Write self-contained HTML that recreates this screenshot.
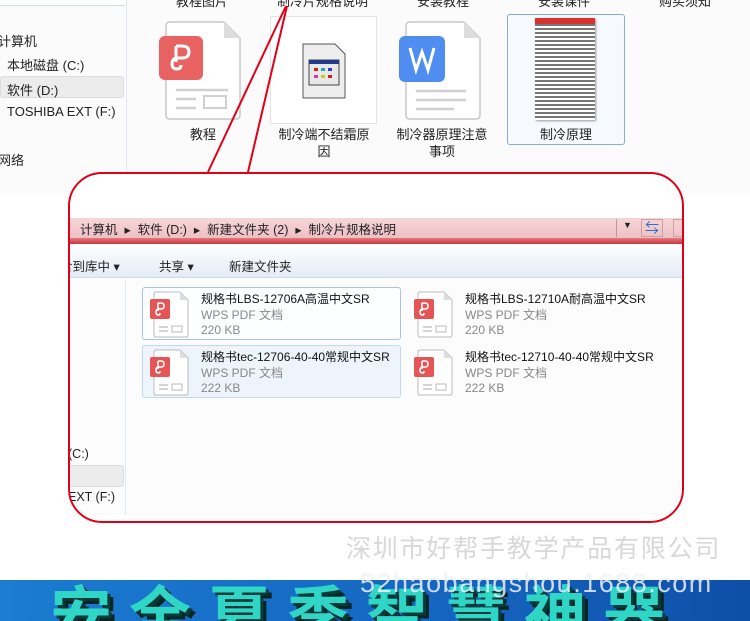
<!DOCTYPE html>
<html><head><meta charset="utf-8">
<style>
*{margin:0;padding:0;box-sizing:border-box}
body{width:750px;height:621px;overflow:hidden;background:#fff;font-family:"Liberation Sans","Noto Sans CJK SC",sans-serif;position:relative;color:#222}
.a{position:absolute}
.t{font-size:13px;white-space:nowrap}
.lbl{font-size:13px;text-align:center;line-height:17px;color:#222}
.tile{position:absolute;width:259px;height:53px;border:1px solid #a9c4e6;border-radius:3px;background:#fdfeff}
.tile.sel{background:#eef4fc;border-color:#c4d8f0}
.name{position:absolute;left:58px;top:2px;font-size:12px;color:#111;white-space:nowrap}
.sub{position:absolute;left:58px;font-size:12px;color:#888;white-space:nowrap}
</style></head><body>
<div class="a" style="left:0;top:0;width:750px;height:195px;background:#fbfbfb"></div>
<div class="a" style="left:0;top:0;width:125px;height:6px;border-bottom:1px solid #cfdcec;background:#fff"></div>
<div class="a" style="left:126px;top:0;width:1px;height:195px;background:#dfe7f1"></div>
<div class="a t" style="left:-2px;top:31px">计算机</div>
<div class="a t" style="left:7px;top:55px">本地磁盘 (C:)</div>
<div class="a" style="left:0;top:76px;width:124px;height:22px;background:#ececec;border:1px solid #dcdcdc;border-radius:3px"></div>
<div class="a t" style="left:7px;top:80px">软件 (D:)</div>
<div class="a t" style="left:7px;top:104px">TOSHIBA EXT (F:)</div>
<div class="a t" style="left:-2px;top:150px">网络</div>
<div class="a t" style="left:176px;top:-9px">教程图片</div>
<div class="a t" style="left:277px;top:-9px">制冷片规格说明</div>
<div class="a t" style="left:417px;top:-9px">安装教程</div>
<div class="a t" style="left:538px;top:-9px">安装课件</div>
<div class="a t" style="left:659px;top:-9px">购买须知</div>

<svg class="a" style="left:158px;top:20px" width="86" height="102" viewBox="0 0 86 102">
<path d="M12,2 H66 L82,18 V95 Q82,99 78,99 H12 Q8,99 8,95 V6 Q8,2 12,2Z" fill="#fff" stroke="#c8c8c8" stroke-width="1.5"/>
<path d="M66,2 V18 H82Z" fill="#ddd"/>
<rect x="1" y="16" width="44" height="44" rx="6" fill="#e86262"/>
<path d="M18,26 V42 M18,26 H24 Q31,26 31,32 Q31,38 24,38 H20 Q14,38 14,44 Q14,49 19,49 Q23,49 23,45" fill="none" stroke="#fff" stroke-width="3"/>
<path d="M18,70 H70 M18,79 H38 M18,88 H38" stroke="#d0d0d0" stroke-width="2.5"/>
<rect x="46" y="76" width="22" height="12" fill="none" stroke="#d0d0d0" stroke-width="2"/>
</svg>
<div class="a lbl" style="left:163px;top:126px;width:80px">教程</div>

<div class="a" style="left:270px;top:16px;width:107px;height:108px;border:1px solid #e3e3e3;background:#fff"></div>
<svg class="a" style="left:301px;top:43px" width="46" height="56" viewBox="0 0 46 56">
<path d="M2,1 H34 L44,11 V55 H2Z" fill="#eee" stroke="#555"/>
<rect x="8" y="17" width="30" height="25" fill="#e8e8e8" stroke="#444"/>
<rect x="8" y="17" width="30" height="4" fill="#223a8a"/>
<g fill="#c22"><rect x="13" y="25" width="4" height="3"/></g><g fill="#2aa"><rect x="20" y="25" width="4" height="3"/></g><g fill="#24c"><rect x="27" y="25" width="4" height="3"/></g>
<g fill="#c3c"><rect x="13" y="32" width="4" height="3"/></g><g fill="#cc2"><rect x="20" y="32" width="4" height="3"/></g><g fill="#c22"><rect x="27" y="32" width="4" height="3"/></g>
</svg>
<div class="a lbl" style="left:270px;top:126px;width:108px">制冷端不结霜原<br>因</div>

<svg class="a" style="left:398px;top:20px" width="86" height="102" viewBox="0 0 86 102">
<path d="M12,2 H66 L82,18 V95 Q82,99 78,99 H12 Q8,99 8,95 V6 Q8,2 12,2Z" fill="#fff" stroke="#c8c8c8" stroke-width="1.5"/>
<path d="M66,2 V18 H82Z" fill="#ddd"/>
<rect x="1" y="16" width="46" height="46" rx="6" fill="#4f8ef0"/>
<path d="M12,28 L18,50 L24,32 L30,50 L36,28" fill="none" stroke="#fff" stroke-width="3"/>
<path d="M18,71 H68 M18,80 H68 M18,89 H56" stroke="#d0d0d0" stroke-width="2.5"/>
</svg>
<div class="a lbl" style="left:392px;top:126px;width:100px">制冷器原理注意<br>事项</div>

<div class="a" style="left:507px;top:14px;width:118px;height:131px;border:1px solid #84acdd;border-radius:3px;background:#f6f9fd"></div>
<div class="a" style="left:535px;top:18px;width:60px;height:102px;background:repeating-linear-gradient(#fff 0 2px,#777 2px 4px);box-shadow:1px 1px 2px #999"></div>
<div class="a" style="left:535px;top:18px;width:60px;height:6px;background:#d93030"></div>
<div class="a lbl" style="left:507px;top:126px;width:118px">制冷原理</div>

<svg class="a" style="left:0;top:0" width="750" height="621">
<path d="M208,172 L286,6 M248,172 L287,6" stroke="#e0001b" stroke-width="2" fill="none"/>
</svg>

<div class="a" style="left:68px;top:172px;width:616px;height:351px;border-radius:34px;overflow:hidden;background:#fff">
 <div class="a" style="left:0;top:46px;width:616px;height:20px;background:linear-gradient(#f6d6d8,#eec0c3)"></div>
 <div class="a" style="left:0;top:66px;width:616px;height:6px;background:linear-gradient(#e37a80,#c9363d)"></div>
 <div class="a" style="left:0;top:72px;width:616px;height:4px;background:#fff"></div>
 <div class="a t" style="left:12px;top:47px;font-size:12.5px">计算机 &nbsp;▸&nbsp; 软件 (D:) &nbsp;▸&nbsp; 新建文件夹 (2) &nbsp;▸&nbsp; 制冷片规格说明</div>
 <div class="a" style="left:548px;top:47px;width:1px;height:18px;background:#b99"></div>
 <div class="a t" style="left:555px;top:48px;font-size:9px">▼</div>
 <div class="a t" style="left:577px;top:46px;color:#2a6fd0;font-size:14px">⇆</div>
 <div class="a" style="left:573px;top:47px;width:22px;height:18px;border:1px solid #c9a0a3"></div>
 <div class="a" style="left:605px;top:47px;width:12px;height:18px;border:1px solid #c9a0a3"></div>
 <div class="a" style="left:0;top:76px;width:616px;height:30px;background:linear-gradient(#fafcfe,#e4ecf6);border-bottom:1px solid #cdd9e8"></div>
 <div class="a t" style="left:-8px;top:84px;font-size:12.5px">含到库中 ▾</div>
 <div class="a t" style="left:91px;top:84px;font-size:12.5px">共享 ▾</div>
 <div class="a t" style="left:161px;top:84px;font-size:12.5px">新建文件夹</div>
 <div class="a" style="left:0;top:107px;width:616px;height:236px;background:#fcfcfc"></div>
 <div class="a" style="left:57px;top:107px;width:1px;height:236px;background:#dfe7f1"></div>
 <div class="a t" style="left:0;top:275px;font-size:12.5px">(C:)</div>
 <div class="a" style="left:-4px;top:293px;width:60px;height:22px;background:#ececec;border:1px solid #dcdcdc;border-radius:3px"></div>
 <div class="a t" style="left:0;top:318px;font-size:12.5px">EXT (F:)</div>
</div>
<div class="a" style="left:68px;top:172px;width:616px;height:351px;border:2px solid #e0001b;border-radius:34px"></div>

<div class="tile" style="left:142px;top:287px"><div class="name">规格书LBS-12706A高温中文SR</div><div class="sub" style="top:18px">WPS PDF 文档</div><div class="sub" style="top:35px">220 KB</div></div>
<div class="tile sel" style="left:142px;top:345px"><div class="name">规格书tec-12706-40-40常规中文SR</div><div class="sub" style="top:18px">WPS PDF 文档</div><div class="sub" style="top:35px">222 KB</div></div>
<div class="tile" style="left:406px;top:287px;border-color:transparent;background:transparent"><div class="name">规格书LBS-12710A耐高温中文SR</div><div class="sub" style="top:18px">WPS PDF 文档</div><div class="sub" style="top:35px">220 KB</div></div>
<div class="tile" style="left:406px;top:345px;border-color:transparent;background:transparent"><div class="name">规格书tec-12710-40-40常规中文SR</div><div class="sub" style="top:18px">WPS PDF 文档</div><div class="sub" style="top:35px">222 KB</div></div>

<svg class="a" style="left:0;top:0" width="750" height="621">
<defs><g id="sp">
<path d="M6,1 H30 L38,9 V44 Q38,46 36,46 H6 Q4,46 4,44 V3 Q4,1 6,1Z" fill="#fff" stroke="#bbb"/>
<path d="M30,1 V9 H38Z" fill="#ddd"/>
<rect x="0" y="8" width="20" height="20" rx="2" fill="#e65555"/>
<path d="M8,12 V20 M8,12 H11 Q14,12 14,15 Q14,18 11,18 H9 Q6,18 6,21 Q6,24 8.5,24 Q10,24 10,22" fill="none" stroke="#fff" stroke-width="1.6"/>
<path d="M9,36 H18 M9,40 H18" stroke="#bbb" stroke-width="1.2"/>
<rect x="22" y="35" width="10" height="6" fill="none" stroke="#bbb"/>
</g></defs>
<use href="#sp" x="150" y="291"/><use href="#sp" x="150" y="349"/>
<use href="#sp" x="414" y="291"/><use href="#sp" x="414" y="349"/>
</svg>

<div class="a" style="left:346px;top:529px;font-size:25px;color:#d8d8d8;white-space:nowrap;letter-spacing:1.8px">深圳市好帮手教学产品有限公司</div>

<div class="a" style="left:0;top:580px;width:750px;height:41px;overflow:hidden;background:linear-gradient(90deg,#1b7cd0,#1565c0 60%,#0e4fa8)">
 <div class="a" style="left:50px;top:2px;font-size:62px;font-weight:bold;color:#2fd6c6;white-space:nowrap;letter-spacing:17px;text-shadow:3px 3px 0 #0b3a3a,6px 6px 0 #062626;line-height:70px">安全夏季智慧神器</div>
</div>
<div class="a" style="left:360px;top:568px;font-size:27px;color:rgba(235,240,248,.85);white-space:nowrap;letter-spacing:1.5px">52haobangshou.1688.com</div>
</body></html>
